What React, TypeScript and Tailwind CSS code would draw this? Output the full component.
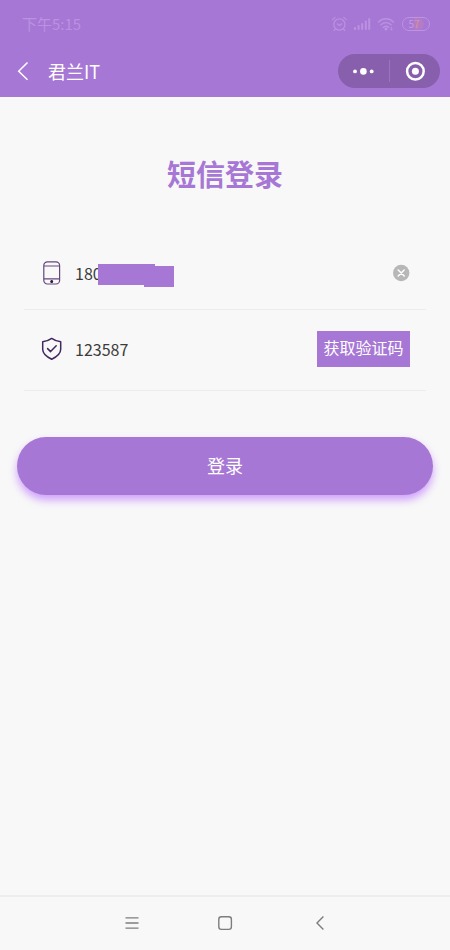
import React, { useState } from 'react';

function StatusBar() {
  return (
    <div className="flex h-12 items-center justify-between pl-[22px] pr-5 text-[#bb91e1]">
      <span className="text-[15px] leading-5">下午5:15</span>
      <div className="flex items-center gap-[6px]">
        {/* Alarm */}
        <svg className="h-4 w-4" viewBox="0 0 16 16" fill="none" stroke="currentColor" strokeWidth="1.2" strokeLinecap="round">
          <circle cx="8.4" cy="8.5" r="5.6" />
          <path d="M6.2 7.8 8.4 9.4l2.3-1.6M1.4 3.6 4 1.4M15.4 3.6l-2.6-2.2M4.2 13.2 3 14.6M12.6 13.2l1.2 1.4" />
        </svg>
        {/* Signal */}
        <svg className="h-4 w-[18px]" viewBox="0 0 18 16" fill="currentColor">
          <rect x="1" y="11" width="2" height="3" rx="1" />
          <rect x="4.6" y="9" width="2" height="5" rx="1" />
          <rect x="8.2" y="7" width="2" height="7" rx="1" />
          <rect x="11.8" y="4.5" width="2" height="9.5" rx="1" />
          <rect x="15.2" y="2" width="2" height="12" rx="1" />
        </svg>
        {/* Wifi */}
        <svg className="h-4 w-[18px]" viewBox="0 0 18 16" fill="none" stroke="currentColor" strokeWidth="1.5" strokeLinecap="round">
          <path d="M1.5 6C6 1.8 12 1.8 16.5 6M4 8.8c3-2.7 7-2.7 10 0M6.3 11.3c1.7-1.3 3.7-1.3 5.4 0" />
          <circle cx="9" cy="13" r="0.8" fill="currentColor" />
          <path d="M14.5 11v3M14.5 14l-1-1M14.5 14l1-1" strokeWidth="0.8" />
        </svg>
        <span className="ml-[1px] flex h-[14px] w-7 items-center justify-center rounded-full border border-[#bd93e2] text-[10px] leading-3">
          <span className="text-[#c49be0]">5</span>
          <span className="rounded-r-full bg-[#b27dc6] pr-1 text-[#d8949c]">7</span>
        </span>
      </div>
    </div>
  );
}

function NavBar() {
  return (
    <div className="flex h-[49px] items-start justify-between pl-4 pr-[10px] pt-[6px] text-white">
      <div className="flex h-[34px] items-center">
        <button aria-label="返回" className="mr-4 h-5 w-4">
          <svg className="h-5 w-4" viewBox="0 0 16 20" fill="none" stroke="currentColor" strokeWidth="1.5">
            <path d="M11.5 1.5 2.7 10.2l8.8 8.6" />
          </svg>
        </button>
        <h1 className="text-lg leading-6">君兰IT</h1>
      </div>
      <div className="flex h-[34px] w-[102px] items-center rounded-full bg-[#875fac]">
        <button aria-label="更多" className="flex flex-1 justify-center">
          <svg className="h-[10px] w-6" viewBox="0 0 24 10" fill="currentColor">
            <circle cx="4" cy="5.4" r="1.9" />
            <circle cx="12.4" cy="5.4" r="3.3" />
            <circle cx="20.7" cy="5.4" r="1.9" />
          </svg>
        </button>
        <span className="h-[22px] w-px bg-[#9a74bd]" />
        <button aria-label="关闭" className="flex flex-1 justify-center">
          <svg className="h-5 w-5" viewBox="0 0 20 20">
            <circle cx="10.4" cy="10.3" r="8.3" fill="none" stroke="currentColor" strokeWidth="2.5" />
            <circle cx="10.4" cy="10.3" r="3.5" fill="currentColor" />
          </svg>
        </button>
      </div>
    </div>
  );
}

function LoginForm() {
  const [phone, setPhone] = useState('180');
  const [code, setCode] = useState('123587');

  return (
    <form className="flex flex-col" onSubmit={(e) => e.preventDefault()}>
      <div className="mx-6 flex h-[73px] items-center border-b border-[#ececec] px-4">
        <label htmlFor="phone" aria-label="手机号" className="mr-[11px]">
          <svg className="h-6 w-6" viewBox="0 0 24 24" fill="none" stroke="#64467f" strokeWidth="1.2">
            <rect x="3.8" y="0.8" width="15.8" height="22.2" rx="3.6" />
            <path d="M4 5h15.6M4 17.8h15.6" />
            <circle cx="11.7" cy="20.4" r="0.9" fill="#2c1740" stroke="#2c1740" />
          </svg>
        </label>
        <div className="relative flex-1">
          <input
            id="phone"
            type="tel"
            value={phone}
            onChange={(e) => setPhone(e.target.value)}
            className="block h-6 w-full text-base leading-6 text-[#3c3c3c] outline-none"
          />
          <span className="absolute left-[23px] top-[3px] h-[21px] w-[57px] bg-[#a777d5]" />
          <span className="absolute left-[69px] top-[5px] h-[21px] w-[30px] bg-[#a777d5]" />
        </div>
        <button type="button" aria-label="清除" onClick={() => setPhone('')}>
          <svg className="h-[18px] w-[18px]" viewBox="0 0 18 18">
            <circle cx="9.2" cy="9" r="8.2" fill="#b7b7b7" />
            <path d="m6.2 6 6 6M12.2 6l-6 6" stroke="#fff" strokeWidth="1.5" strokeLinecap="round" />
          </svg>
        </button>
      </div>

      <div className="mx-6 flex h-[81px] items-center border-b border-[#ececec] px-4 pb-[2px]">
        <label htmlFor="code" aria-label="验证码" className="mr-[11px]">
          <svg className="h-6 w-6" viewBox="0 0 24 24" fill="none" stroke="#43285f" strokeWidth="1.5" strokeLinejoin="round" strokeLinecap="round">
            <path d="M11.7 1.4c2.7 2 5.7 3 9 3.4v7.4c0 4.6-4.4 7.8-9 10-4.6-2.2-9-5.4-9-10V4.8c3.3-.4 6.3-1.4 9-3.4Z" />
            <path d="m7.6 11.6 3 3 5.6-5.8" />
          </svg>
        </label>
        <input
          id="code"
          type="text"
          value={code}
          onChange={(e) => setCode(e.target.value)}
          className="h-6 min-w-0 flex-1 text-base leading-6 text-[#3c3c3c] outline-none"
        />
        <button type="button" className="h-9 w-[93px] bg-[#a777d5] pb-1 text-base leading-6 text-white">
          获取验证码
        </button>
      </div>

      <button
        type="submit"
        className="mx-[17px] mt-[46px] h-[58px] rounded-full bg-[#a777d5] pb-[2px] text-lg leading-6 text-white shadow-[0_5px_8px_#cf9ffb]"
      >
        登录
      </button>
    </form>
  );
}

function SystemNav() {
  return (
    <nav className="flex h-[55px] items-center justify-center gap-[78px] border-t-2 border-[#ededed] pb-[2px] text-[#7d7d7d]">
      <button aria-label="菜单">
        <svg className="h-4 w-4" viewBox="0 0 16 16" fill="none" stroke="currentColor" strokeWidth="1.3">
          <path d="M2.5 2.8h13M2.5 8h13M2.5 13.2h13" />
        </svg>
      </button>
      <button aria-label="主页">
        <svg className="h-4 w-4" viewBox="0 0 16 16" fill="none" stroke="currentColor" strokeWidth="1.4">
          <rect x="1.8" y="1.8" width="12.6" height="12.6" rx="2.6" />
        </svg>
      </button>
      <button aria-label="后退">
        <svg className="h-4 w-4" viewBox="0 0 16 16" fill="none" stroke="currentColor" strokeWidth="1.4">
          <path d="M12.4 1.6 6 8l6.4 6.4" />
        </svg>
      </button>
    </nav>
  );
}

export default function App() {
  return (
    <div className="flex min-h-screen flex-col bg-[#f8f8f8] font-['Noto_Sans_CJK_SC',sans-serif]">
      <header className="bg-[#a777d5]">
        <StatusBar />
        <NavBar />
      </header>
      <main className="flex-1">
        <h2 className="pb-11 pt-14 text-center text-[29px] font-bold leading-10 text-[#a777d5]">短信登录</h2>
        <LoginForm />
      </main>
      <SystemNav />
    </div>
  );
}
